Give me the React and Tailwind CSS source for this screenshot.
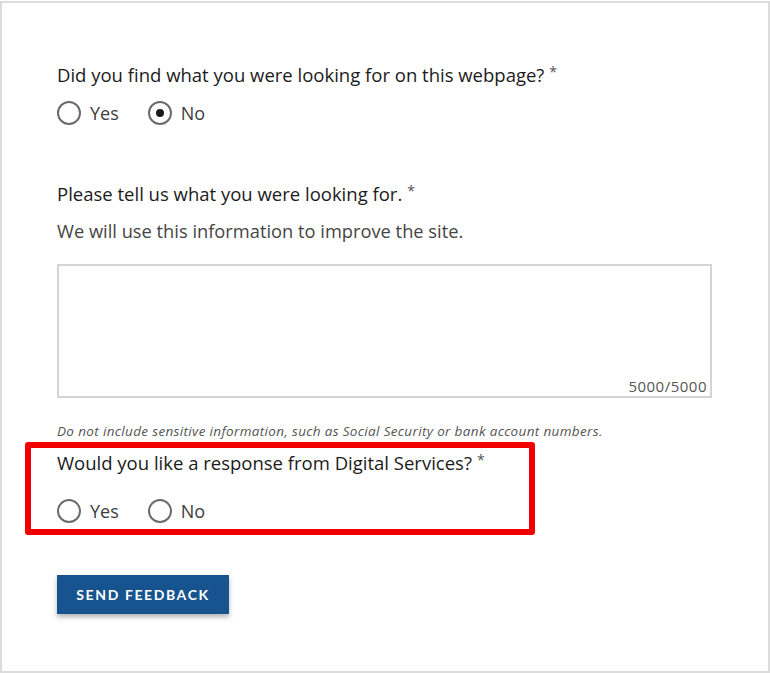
import React, { useState } from "react";

const FONT = { fontFamily: "'Open Sans', Lato, sans-serif" };

function Radio({ label, checked, onChange }) {
  return (
    <label className="flex cursor-pointer items-center gap-[9px]" onClick={onChange}>
      <span className="flex h-[24px] w-[24px] items-center justify-center rounded-full border-2 border-[#6b6b6b] bg-white">
        {checked && <span className="h-[8px] w-[8px] rounded-full bg-[#1b1b1b]" />}
      </span>
      <span className="text-[18px] leading-[24px] text-[#3d3d3d]">{label}</span>
    </label>
  );
}

function Question({ children }) {
  return (
    <div className="text-[18.5px] leading-[24px] text-[#1b1b1b]">
      {children}
      <span className="relative -top-[5px] ml-[5px] text-[14px] text-[#555]">*</span>
    </div>
  );
}

export default function App() {
  const [found, setFound] = useState("no");
  const [response, setResponse] = useState(null);

  return (
    <div className="h-[673px] w-[770px] bg-white pt-[1px]" style={FONT}>
      <div className="h-[672px] w-[770px] border-2 border-[#dcdcdc] pl-[55px] pt-[60px]">
        <Question>Did you find what you were looking for on this webpage?</Question>
        <div className="mt-[12px] flex gap-[29px]">
          <Radio label="Yes" checked={found === "yes"} onChange={() => setFound("yes")} />
          <Radio label="No" checked={found === "no"} onChange={() => setFound("no")} />
        </div>

        <div className="mt-[57px]">
          <Question>Please tell us what you were looking for.</Question>
        </div>
        <p className="mt-[11px] text-[18.3px] leading-[24px] text-[#454545]">
          We will use this information to improve the site.
        </p>

        <div className="mt-[21px] flex h-[134px] w-[655px] items-end justify-end border-2 border-[#d4d4d4] px-[3px] pb-[1px]">
          <span className="text-[15px] leading-[18px] tracking-[0.5px] text-[#555]">5000/5000</span>
        </div>

        <p className="mt-[24px] text-[13.5px] italic leading-[18px] tracking-[0.35px] text-[#555]">
          Do not include sensitive information, such as Social Security or bank account numbers.
        </p>

        <div className="-ml-[32px] mt-[2px] h-[93px] w-[510px] rounded-[3px] border-[6px] border-[#f20000] pl-[26px] pt-[3px]">
          <Question>Would you like a response from Digital Services?</Question>
          <div className="mt-[22px] flex gap-[29px]">
            <Radio label="Yes" checked={response === "yes"} onChange={() => setResponse("yes")} />
            <Radio label="No" checked={response === "no"} onChange={() => setResponse("no")} />
          </div>
        </div>

        <button
          type="button"
          className="mt-[40px] h-[39px] w-[172px] bg-[#17548f] text-[14px] font-bold uppercase tracking-[1.6px] text-white shadow-[0_3px_5px_rgba(0,0,0,0.3)]"
          style={{ fontFamily: "Lato, sans-serif" }}
        >
          Send Feedback
        </button>
      </div>
    </div>
  );
}
